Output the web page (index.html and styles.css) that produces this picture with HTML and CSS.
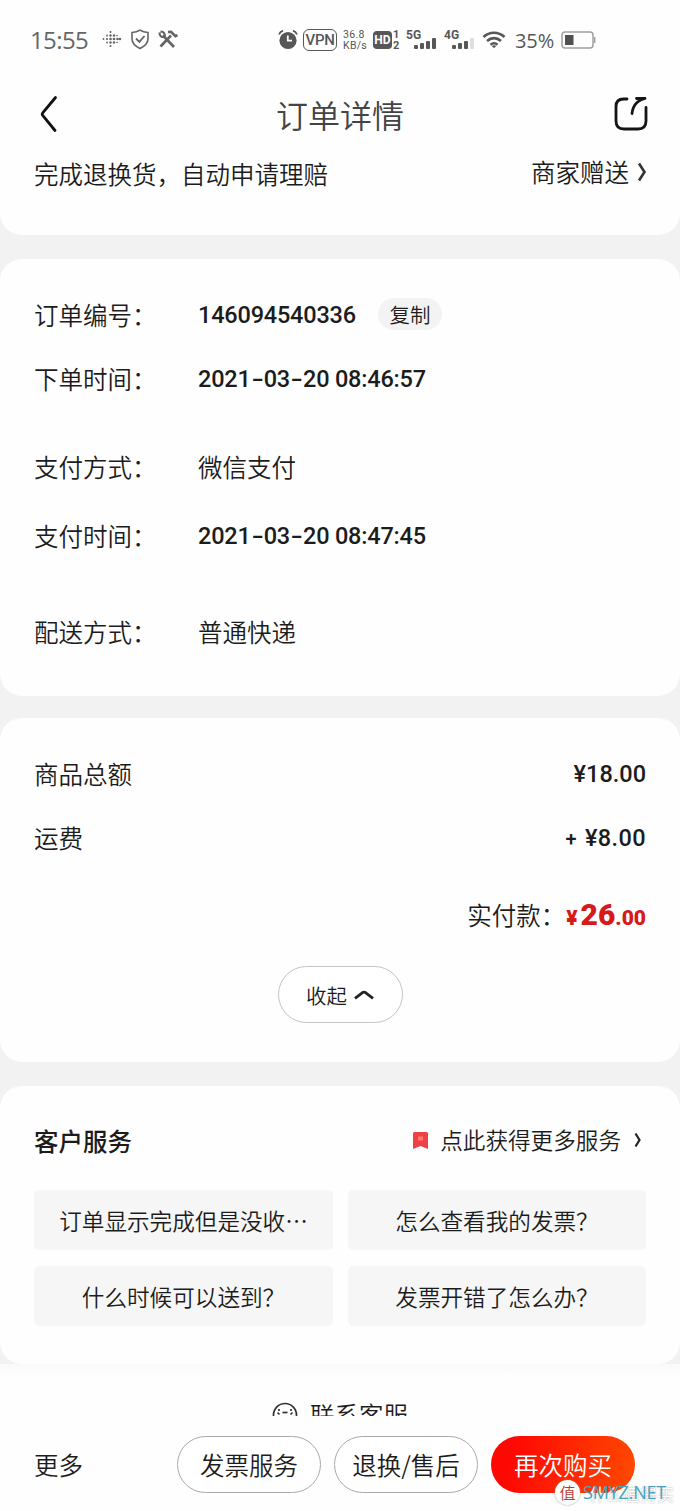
FILE: index.html
```html
<!DOCTYPE html>
<html lang="zh-CN">
<head>
<meta charset="utf-8">
<title>订单详情</title>
<link rel="stylesheet" href="styles.css">
</head>
<body>
<div class="page">
  <header class="top">
    <div class="status">
      <span class="clock">15:55</span>
      <svg class="status-left" width="78" height="24" viewBox="0 0 78 24" fill="none" stroke="#646464">
        <g fill="#646464" stroke="none">
          <circle cx="1.500" cy="11" r=".9"/><circle cx="5" cy="11" r="1.100"/><circle cx="8.500" cy="11" r="1.300"/><circle cx="12" cy="11" r="1.300"/><circle cx="15.500" cy="11" r="1.300"/><circle cx="18" cy="11" r="1.200"/>
          <circle cx="5" cy="7.500" r=".9"/><circle cx="8.500" cy="7.500" r="1.200"/><circle cx="12" cy="7.500" r="1.200"/><circle cx="15" cy="7.500" r=".8"/><circle cx="5" cy="14.500" r=".9"/><circle cx="8.500" cy="14.500" r="1.200"/><circle cx="12" cy="14.500" r="1.200"/><circle cx="15" cy="14.500" r=".8"/>
          <circle cx="8.500" cy="4" r="1"/><circle cx="8.500" cy="18" r="1"/>
        </g>
        <path d="M38 2.200C35.500 4 33 4.500 30 4.500V11c0 4.500 3.800 7.400 8 9.500 4.200-2.100 8-5 8-9.500V4.500c-3 0-5.500-.5-8-2.300z" stroke-width="1.600"/>
        <path d="m34 10.500 3.400 3.400L42.500 8" stroke-width="1.800"/>
        <path d="m61 7.500 11 11.500M69 7.500 58.500 18.500" stroke-width="2.600"/>
        <path d="M57.500 4.500c0 4 2 5 5 4.200.8-3-.5-5-4-5.200" stroke-width="2.200"/>
        <path d="m66 4 3-.2 4.500 4.400 2-1" stroke-width="2.600"/>
      </svg>
      <svg class="alarm" width="20" height="22" viewBox="0 0 20 22">
        <circle cx="10" cy="11.500" r="8.600" fill="#575757"/>
        <path d="M9.800 6.500v5.200H14" fill="none" stroke="#fff" stroke-width="1.800"/>
        <path d="M1 5.500C1.800 3.500 3 2.500 5 1.700M19 5.500c-.8-2-2-3-4-3.800" fill="none" stroke="#575757" stroke-width="1.800"/>
      </svg>
      <span class="vpn">VPN</span>
      <span class="speed"><span>36.8</span><span>KB/s</span></span>
      <span class="hd">HD</span>
      <span class="sims"><span>1</span><span>2</span></span>
      <span class="signal"><b>5G</b>
        <svg width="23" height="12" viewBox="0 0 23 12" fill="#575757"><rect y="7" width="4" height="4" rx="1"/><rect x="6" y="5" width="4" height="6" rx="1"/><rect x="12" y="3" width="4" height="8" rx="1"/><rect x="18" y="0" width="4" height="11" rx="1"/></svg>
      </span>
      <span class="signal"><b>4G</b>
        <svg width="23" height="12" viewBox="0 0 23 12" fill="#575757"><rect y="7" width="4" height="4" rx="1"/><rect x="6" y="5" width="4" height="6" rx="1"/><rect x="12" y="3" width="4" height="8" rx="1"/><rect x="18" y="0" width="4" height="11" rx="1" fill="#dedede"/></svg>
      </span>
      <svg class="wifi" width="24" height="19" viewBox="0 0 24 19" fill="none" stroke="#575757" stroke-width="2.600">
        <path d="M1.500 6c6-5.700 15-5.700 21 0M5 10c4.200-3.800 9.800-3.800 14 0M8.500 13.700c2.200-1.800 4.800-1.800 7 0"/>
        <path d="m9.800 15 2.200 2.200 2.200-2.200c-1.200-.9-3.200-.9-4.400 0z" fill="#575757" stroke="none"/>
      </svg>
      <span class="percent">35%</span>
      <svg class="battery" width="35" height="18" viewBox="0 0 35 18" fill="none" stroke="#a0a0a0" stroke-width="1.500">
        <rect x="1" y="1" width="31" height="16" rx="3"/><path d="M33.700 6v6"/><rect x="4" y="4" width="8.500" height="10" fill="#505050" stroke="none"/>
      </svg>
    </div>
    <div class="nav">
      <svg width="20" height="40" viewBox="0 0 20 40" fill="none" stroke="#111" stroke-width="2.800" stroke-linecap="round" stroke-linejoin="round"><path d="M16.500 3.500 3.500 19.200q-.7 1 0 2L16 36.500"/></svg>
      <h1 class="title">订单详情</h1>
      <svg width="36" height="36" viewBox="0 0 36 36" fill="none" stroke="#151515" stroke-width="2.800" stroke-linecap="round" stroke-linejoin="round"><path d="M14 3H10.500Q3 3 3 10.500V25q0 8 8 8h14q8 0 8-8V11.500"/><path d="M23.500 2.500h8.500q-8.500 2-11.500 9-1.100 2.500-1.500 6"/></svg>
    </div>
    <div class="claim">
      <span>完成退换货，自动申请理赔</span>
      <span class="gift">商家赠送<svg width="10" height="20" viewBox="0 0 10 20" fill="none" stroke="#333" stroke-width="2.600"><path d="m2 1.500 5.500 8.500L2 18.500"/></svg></span>
    </div>
  </header>

  <section class="card order">
    <div class="row"><span class="label">订单编号：</span><span class="num id">146094540336</span><span class="copy">复制</span></div>
    <div class="row placed"><span class="label">下单时间：</span><span class="num">2021<i>-</i>03<i>-</i>20 08:46:57</span></div>
    <div class="row method"><span class="label">支付方式：</span><span>微信支付</span></div>
    <div class="row paid"><span class="label">支付时间：</span><span class="num">2021<i>-</i>03<i>-</i>20 08:47:45</span></div>
    <div class="row delivery"><span class="label">配送方式：</span><span>普通快递</span></div>
  </section>

  <section class="card bill">
    <div class="row between"><span>商品总额</span><span class="num">¥18.00</span></div>
    <div class="row between freight"><span>运费</span><span class="num"><small>+</small>¥8.00</span></div>
    <div class="row total"><span>实付款：</span><span class="price"><small class="yen">¥</small>26<small>.00</small></span></div>
    <button class="pill collapse">收起<svg width="20" height="10" viewBox="0 0 20 10" fill="none" stroke="#222" stroke-width="2.800"><path d="M1 8.300 8.500 2.600q1.500-.8 3 0L19 8.300"/></svg></button>
  </section>

  <section class="card service">
    <div class="row between">
      <h2 class="heading">客户服务</h2>
      <span class="more-link">
        <svg width="15" height="17" viewBox="0 0 15 17"><path d="M0 1.500Q0 0 1.500 0h12Q15 0 15 1.500V17l-7.500-3L0 17z" fill="#ef4144"/><path d="M5 4.500h5v4H5z" fill="#fb7870"/></svg>
        <span>点此获得更多服务</span>
        <svg class="chev" width="8" height="16" viewBox="0 0 8 16" fill="none" stroke="#222" stroke-width="2.200"><path d="m1.500 1.500 4 6.500-4 6.500"/></svg>
      </span>
    </div>
    <div class="faq">
      <a>订单显示完成但是没收<span class="dots">⋯</span></a>
      <a>怎么查看我的发票？</a>
      <a>什么时候可以送到？</a>
      <a>发票开错了怎么办？</a>
    </div>
  </section>

  <div class="contact">
    <svg width="26" height="26" viewBox="0 0 26 26" fill="none" stroke="#333" stroke-width="1.700"><circle cx="13" cy="13" r="11.500"/><path d="M10.500 10.500h5"/><path d="M7 7v2M19 7v2M5.500 10.500l2 2M20.500 10.500l-2 2"/></svg>
    <span>联系客服</span>
  </div>

  <footer class="bar">
    <span class="more">更多</span>
    <button class="pill action">发票服务</button>
    <button class="pill action">退换/售后</button>
    <button class="pill action buy">再次购买</button>
    <div class="mark">
      <span class="seal">值</span>
      <span class="mark-name">什么值得买</span>
      <span class="mark-site">SMYZ.NET</span>
    </div>
  </footer>
</div>
</body>
</html>
```

FILE: styles.css
```css
* { box-sizing: border-box; }

body {
  margin: 0;
  background: #f2f2f2;
  color: #1c1c1c;
  font: 350 24.5px/40px "Noto Sans CJK SC DemiLight", "Noto Sans CJK SC", sans-serif;
}

.page {
  display: flex;
  flex-direction: column;
  width: 680px;
  height: 1511px;
  overflow: hidden;
}

svg { display: block; flex: none; }
span, a { white-space: nowrap; }

/* Status bar and navigation */
.top {
  height: 235px;
  background: #fefefe;
  border-radius: 0 0 22px 22px;
}

.status {
  display: flex;
  align-items: center;
  height: 80px;
  padding-left: 30px;
  color: #575757;
  font-family: Roboto, sans-serif;
  font-weight: 400;
}
.clock { width: 72px; font: 24px/40px "Open Sans", sans-serif; letter-spacing: -.6px; color: #666; }
.alarm { margin-left: 98px; }
.vpn {
  width: 34px;
  height: 22px;
  margin-left: 5px;
  border: 1.5px solid #575757;
  border-radius: 6px;
  font: 500 15px/20px Roboto, sans-serif;
  letter-spacing: -.3px;
  text-align: center;
}
.speed {
  display: flex;
  flex-direction: column;
  width: 24px;
  margin-left: 6px;
  font-size: 10.5px;
  line-height: 11px;
  letter-spacing: .3px;
}
.hd {
  width: 19px;
  height: 18px;
  margin-left: 6px;
  border-radius: 4px;
  background: #575757;
  color: #fff;
  font: bold 12px/19px Roboto, sans-serif;
  text-align: center;
}
.sims {
  display: flex;
  flex-direction: column;
  width: 7px;
  margin-left: 1px;
  font-size: 11px;
  font-weight: bold;
  line-height: 11px;
}
.signal { width: 31px; height: 24px; margin-left: 6px; }
.signal + .signal { margin-left: 7px; }
.signal b { display: block; height: 11px; font-size: 12px; line-height: 14px; }
.signal svg { margin: -1px 0 0 8px; }
.wifi { margin-left: 7px; }
.percent { width: 46px; margin-left: 9px; font: 20px/40px "Open Sans", sans-serif; letter-spacing: -.1px; }
.status .percent { padding-top: 2px; }

.nav {
  display: flex;
  align-items: center;
  justify-content: space-between;
  height: 68px;
  padding: 0 31px 0 39px;
}
.title { margin: 0 0 0 8px; color: #444; font-size: 32px; font-weight: inherit; }

.claim {
  display: flex;
  justify-content: space-between;
  height: 48px;
  padding: 6px 33px 0 34px;
}
.gift { display: flex; align-items: center; gap: 8px; height: 36px; }

/* Cards */
.card {
  flex: none;
  margin-top: 24px;
  padding: 36px 34px 0;
  border-radius: 22px;
  background: #fefefe;
}
.row { display: flex; height: 40px; }
.between { justify-content: space-between; }
.num { font-family: Roboto, sans-serif; font-size: 23.5px; font-weight: 500; letter-spacing: -.2px; }
.num i { display: inline-block; width: 13px; font-style: normal; text-align: center; transform: scaleX(1.5); }

.order { height: 437px; }
.label { width: 164px; }
.id { width: 180px; }
.copy {
  width: 64px;
  height: 32px;
  margin-top: 3px;
  border-radius: 16px;
  background: #f3f3f3;
  font-size: 20.5px;
  line-height: 32px;
  text-align: center;
}
.placed { margin-top: 24px; }
.method { margin-top: 48px; }
.paid { margin-top: 29px; }
.delivery { margin-top: 56px; }

.bill { height: 344px; margin-top: 22px; }
.bill .num { letter-spacing: 0; }
.freight { margin-top: 24px; }
.bill .freight .num { letter-spacing: .4px; }
.freight small { margin-right: 8px; font-size: 20px; }
.total { justify-content: flex-end; margin-top: 37px; }
.price { margin-left: 1px; color: #d61919; font-family: Roboto, sans-serif; font-size: 30px; font-weight: 900; }
.price small { font-size: 21px; }
.price .yen { margin-right: 3px; }

.pill {
  display: flex;
  flex: none;
  align-items: center;
  justify-content: center;
  padding: 0;
  border: 1px solid #aaa;
  border-radius: 29px;
  background: #fff;
  color: #1c1c1c;
  font: inherit;
}
.collapse { gap: 7px; width: 125px; height: 57px; margin: 31px auto 0; border-color: #c4c4c4; font-size: 20.5px; }

.service { height: 278px; padding-top: 35px; }
.heading { margin: 0; font-family: "Noto Sans CJK SC", sans-serif; font-size: 24.5px; font-weight: 500; }
.more-link { display: flex; align-items: center; height: 38px; font-size: 22.6px; }
.more-link span { margin: 0 13px 0 12px; }
.chev { margin-right: 4px; }
.faq {
  display: grid;
  grid-template-columns: 299px 298px;
  grid-auto-rows: 60px;
  gap: 16px 15px;
  margin-top: 29px;
}
.faq a {
  border-radius: 5px;
  background: #f6f6f6;
  font-size: 22.6px;
  line-height: 62px;
  text-align: center;
}

/* Contact line, cut off by the action bar */
.contact {
  display: flex;
  flex: none;
  justify-content: center;
  gap: 12px;
  height: 52px;
  padding-top: 31px;
  overflow: hidden;
  background: linear-gradient(#f9f9f9, #fefefe 12px);
}
.contact svg { margin-top: 7px; }

.bar {
  position: relative;
  display: flex;
  flex: none;
  gap: 13px;
  height: 95px;
  padding: 20px 0 0 34px;
  background: #fefefe;
}
.more { width: 130px; line-height: 57px; }
.action { width: 144px; height: 57px; }
.buy { border: 0; background: linear-gradient(100deg, #fe0803 15%, #ff4a00); color: #fff; }

/* Watermark over the corner of the action bar */
.mark { position: absolute; left: 555px; top: 64px; width: 125px; height: 28px; }
.seal {
  position: absolute;
  left: 0;
  top: 0;
  width: 25px;
  height: 25px;
  border-radius: 50%;
  background: #fff;
  box-shadow: 0 0 2px #999;
  color: #b33c35;
  font-size: 16px;
  line-height: 24px;
  text-align: center;
}
.mark-name { position: absolute; left: 34px; top: 1px; color: #fff; font-size: 17px; line-height: 26px; text-shadow: 0 0 2px #999; }
.mark-site { position: absolute; left: 28px; top: 0; color: #46a3bd; font: 18px/24px "Open Sans", sans-serif; letter-spacing: -.2px; }
```
